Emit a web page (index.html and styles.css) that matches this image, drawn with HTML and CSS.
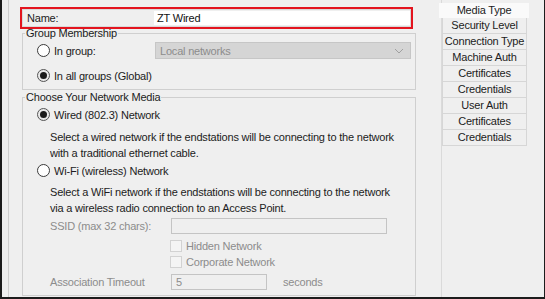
FILE: index.html
```html
<!DOCTYPE html>
<html lang="en">
<head>
    <meta charset="UTF-8">
    <title>Network Profile</title>
    <link rel="stylesheet" href="styles.css">
</head>
<body>
    <div class="window">
        <div class="main">
            <div class="name-row">
                <span class="name-label">Name:</span>
                <div class="name-input">ZT Wired</div>
            </div>

            <fieldset class="group">
                <legend>Group Membership</legend>
                <div class="opt-row first">
                    <span class="radio"></span>
                    <span>In group:</span>
                    <div class="select">
                        <span>Local networks</span>
                        <svg width="10" height="6" viewBox="0 0 10 6"><path d="M1 1 L5 5 L9 1" fill="none" stroke="#a0a0a0" stroke-width="1"/></svg>
                    </div>
                </div>
                <div class="opt-row second">
                    <span class="radio checked"></span>
                    <span>In all groups (Global)</span>
                </div>
            </fieldset>

            <!-- media choice -->
            <fieldset class="media">
                <legend>Choose Your Network Media</legend>
                <div class="media-row wired">
                    <span class="radio checked"></span>
                    <span>Wired (802.3) Network</span>
                </div>
                <p class="desc wired-desc">Select a wired network if the endstations will be connecting to the network<br>with a traditional ethernet cable.</p>
                <div class="media-row wifi">
                    <span class="radio"></span>
                    <span>Wi-Fi (wireless) Network</span>
                </div>
                <p class="desc wifi-desc">Select a WiFi network if the endstations will be connecting to the network<br>via a wireless radio connection to an Access Point.</p>

                <div class="field-row ssid-row">
                    <span class="field-label">SSID (max 32 chars):</span>
                    <div class="text-box ssid"></div>
                </div>
                <div class="check-row hidden-row">
                    <span class="checkbox"></span>
                    <span>Hidden Network</span>
                </div>
                <div class="check-row corp-row">
                    <span class="checkbox"></span>
                    <span>Corporate Network</span>
                </div>
                <div class="field-row timeout-row">
                    <span class="field-label">Association Timeout</span>
                    <div class="text-box timeout">5</div>
                    <span class="unit">seconds</span>
                </div>
            </fieldset>
        </div>

        <div class="side">
            <ul class="tabs">
                <li class="tab active">Media Type</li>
                <li class="tab">Security Level</li>
                <li class="tab">Connection Type</li>
                <li class="tab">Machine Auth</li>
                <li class="tab">Certificates</li>
                <li class="tab">Credentials</li>
                <li class="tab">User Auth</li>
                <li class="tab">Certificates</li>
                <li class="tab">Credentials</li>
            </ul>
        </div>
    </div>
</body>
</html>
```

FILE: styles.css
```css
:root {
    --bg: #efefef;
    --text: #1c1c22;
    --muted: #8c8c8c;
    --line: #cfcfcf;
    --red: #e3141e;
}

* {
    margin: 0;
    padding: 0;
    box-sizing: border-box;
}

body {
    margin: 0;
    background: var(--bg);
    font-family: "Liberation Sans", Arial, sans-serif;
    font-size: 11px;
    letter-spacing: -0.2px;
    color: var(--text);
}

.window {
    width: 545px;
    height: 299px;
    display: flex;
    border-left: 2px solid #1c1c1c;
    border-right: 1px solid #1c1c1c;
    border-bottom: 2px solid #1c1c1c;
    background: var(--bg);
}

.main {
    margin-left: 6px;
    width: 408px;
    border-left: 1px solid var(--line);
    padding-left: 13px;
    padding-top: 7px;
}

/* Name field with red highlight */
.name-row {
    margin-left: -2px;
    width: 393px;
    height: 22px;
    border: 2px solid var(--red);
    box-shadow: inset 0 0 0 1px #d9d9d9;
    display: flex;
    align-items: center;
    padding-left: 5px;
}

.name-input {
    margin-left: auto;
    margin-right: 1px;
    width: 256px;
    height: 14px;
    background: #fff;
    line-height: 14px;
    padding-left: 3px;
    color: #111;
}

fieldset {
    border: 1px solid var(--line);
    padding: 0;
    margin: 0;
    width: 394px;
    min-width: 0;
}

legend {
    margin-left: 2px;
    padding: 0 1px;
    line-height: 12px;
}

.group {
    margin-top: -2px;
    padding-bottom: 5px;
}

.opt-row {
    display: flex;
    align-items: center;
    height: 17px;
    padding-left: 14px;
}

.opt-row.first { margin-top: 3px; }
.opt-row.second { margin-top: 8px; }

.radio {
    width: 13px;
    height: 13px;
    border-radius: 50%;
    border: 1px solid #3a3a3a;
    background: #fff;
    margin-right: 4px;
    display: flex;
    align-items: center;
    justify-content: center;
    flex-shrink: 0;
}

.radio.checked {
    border-color: #555;
    background: #e8e8e8;
}

.radio.checked::after {
    content: '';
    width: 7px;
    height: 7px;
    border-radius: 50%;
    background: #1a1a1a;
}

.select {
    margin-left: auto;
    margin-right: 4px;
    width: 256px;
    height: 17px;
    background: #d5d5d5;
    border: 1px solid #c6c6c6;
    color: var(--muted);
    display: flex;
    align-items: center;
    justify-content: space-between;
    padding: 0 6px 0 4px;
}

.media {
    margin-top: 1px;
    padding-bottom: 5px;
}

.media-row {
    display: flex;
    align-items: center;
    height: 13px;
    padding-left: 14px;
}

.media-row.wired { margin-top: 5px; }
.media-row.wifi { margin-top: 3px; }

.desc {
    padding-left: 27px;
    line-height: 16px;
}

.wired-desc { margin-top: 8px; }
.wifi-desc { margin-top: 7px; }

.field-row {
    display: flex;
    align-items: center;
    height: 16px;
    padding-left: 27px;
    color: var(--muted);
}

.ssid-row { margin-top: 2px; }
.timeout-row { margin-top: 6px; }

.field-label {
    width: 121px;
}

.text-box {
    height: 16px;
    border: 1px solid #c4c4c4;
    background: var(--bg);
    line-height: 14px;
    padding-left: 4px;
    color: var(--muted);
}

.text-box.ssid { width: 216px; }
.text-box.timeout { width: 96px; }

.unit {
    margin-left: 16px;
}

.check-row {
    display: flex;
    align-items: center;
    height: 12px;
    padding-left: 147px;
    color: var(--muted);
}

.hidden-row { margin-top: 6px; }
.corp-row { margin-top: 4px; }

.checkbox {
    width: 12px;
    height: 12px;
    border: 1px solid #d2d2d2;
    background: #f4f4f4;
    margin-right: 4px;
}

/* Right-hand tab list */
.side {
    margin-left: 25px;
    width: 87px;
    border-left: 1px solid #dadada;
}

.tabs {
    list-style-type: none;
    margin-top: 3px;
}

.tab {
    height: 16px;
    line-height: 15px;
    text-align: center;
    width: 85px;
    border: 1px solid #d6d6d6;
    border-top: none;
    white-space: nowrap;
}

.tab.active {
    margin-left: -3px;
    width: 90px;
    height: 15px;
    line-height: 15px;
    background: #fafafa;
    border: none;
}
```
